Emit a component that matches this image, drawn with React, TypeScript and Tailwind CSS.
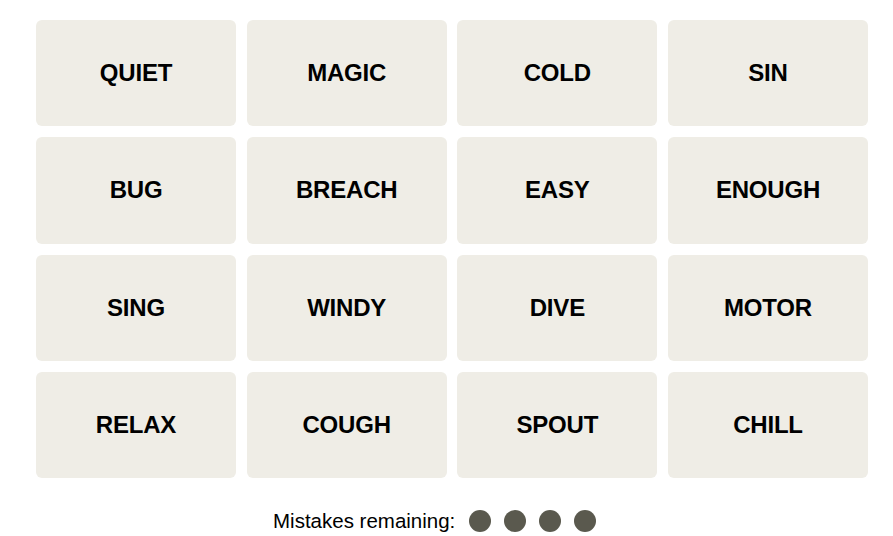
const words = [
  'QUIET', 'MAGIC', 'COLD', 'SIN',
  'BUG', 'BREACH', 'EASY', 'ENOUGH',
  'SING', 'WINDY', 'DIVE', 'MOTOR',
  'RELAX', 'COUGH', 'SPOUT', 'CHILL',
];

export default function App() {
  return (
    <div className="w-[893px] h-[536px] bg-white pt-[20px] pl-[36px]" style={{ fontFamily: '"Liberation Sans", Arial, sans-serif' }}>
      <div className="grid grid-cols-4 w-[832px] gap-x-[10.67px] gap-y-[11px]">
        {words.map((w) => (
          <div
            key={w}
            className="h-[106.3px] rounded-[6px] bg-[#efede6] flex items-center justify-center text-[24px] font-bold text-black tracking-[-0.2px]"
          >
            {w}
          </div>
        ))}
      </div>
      <div className="flex items-center mt-[32px] pl-[237px] h-[22px]">
        <span className="text-[20.5px] text-black mr-[14px]">Mistakes remaining:</span>
        <div className="flex gap-[13px]">
          <span className="w-[22px] h-[22px] rounded-full bg-[#5a594e]" />
          <span className="w-[22px] h-[22px] rounded-full bg-[#5a594e]" />
          <span className="w-[22px] h-[22px] rounded-full bg-[#5a594e]" />
          <span className="w-[22px] h-[22px] rounded-full bg-[#5a594e]" />
        </div>
      </div>
    </div>
  );
}
